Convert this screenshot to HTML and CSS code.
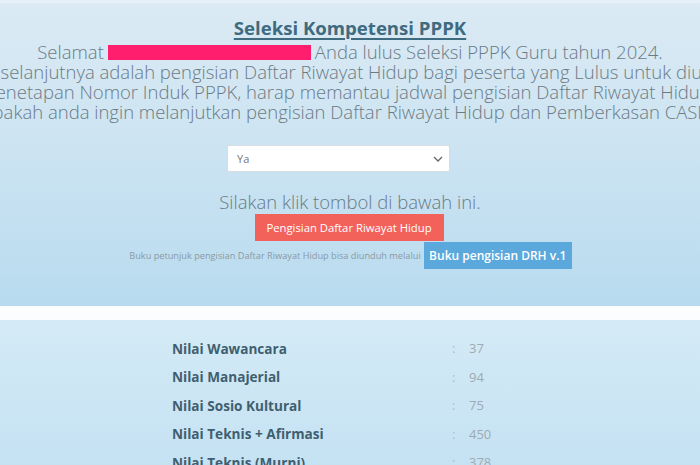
FILE: index.html
```html
<!DOCTYPE html>
<html lang="id">
<head>
    <meta charset="UTF-8">
    <meta name="viewport" content="width=device-width, initial-scale=1.0">
    <title>Seleksi Kompetensi PPPK</title>
    <link rel="stylesheet" href="styles.css">
</head>
<body>
    <div class="panel top-panel">
        <h2 class="title">Seleksi Kompetensi PPPK</h2>
        <div class="lead">
            <div class="line">Selamat <span class="redact"></span> Anda lulus Seleksi PPPK Guru tahun 2024.</div>
            <div class="line">Tahap selanjutnya adalah pengisian Daftar Riwayat Hidup bagi peserta yang Lulus untuk diusulkan</div>
            <div class="line">Penetapan Nomor Induk PPPK, harap memantau jadwal pengisian Daftar Riwayat Hidup.</div>
            <div class="line">Apakah anda ingin melanjutkan pengisian Daftar Riwayat Hidup dan Pemberkasan CASN?</div>
        </div>

        <div class="select-wrap">
            <div class="select">
                <span>Ya</span>
                <svg width="10" height="6" viewBox="0 0 10 6"><path d="M1 1l4 4 4-4" fill="none" stroke="#666" stroke-width="1.3"/></svg>
            </div>
        </div>

        <div class="hint">Silakan klik tombol di bawah ini.</div>
        <div class="btn-row"><button class="btn btn-red">Pengisian Daftar Riwayat Hidup</button></div>
        <div class="guide-row">
            <span class="guide-text">Buku petunjuk pengisian Daftar Riwayat Hidup bisa diunduh melalui</span>
            <button class="btn btn-blue">Buku pengisian DRH v.1</button>
        </div>
    </div>

    <div class="gap"></div>

    <div class="panel score-panel">
        <table class="scores">
            <tr><td class="label">Nilai Wawancara</td><td class="colon">:</td><td class="val">37</td></tr>
            <tr><td class="label">Nilai Manajerial</td><td class="colon">:</td><td class="val">94</td></tr>
            <tr><td class="label">Nilai Sosio Kultural</td><td class="colon">:</td><td class="val">75</td></tr>
            <tr><td class="label">Nilai Teknis + Afirmasi</td><td class="colon">:</td><td class="val">450</td></tr>
            <tr><td class="label">Nilai Teknis (Murni)</td><td class="colon">:</td><td class="val">378</td></tr>
        </table>
    </div>
</body>
</html>
```

FILE: styles.css
```css
body { margin: 0; padding: 0; font-family: 'Open Sans', sans-serif; background: #fbfdfe; overflow: hidden; height: 465px; }
.panel { overflow: hidden; }
.top-panel { height: 306px; box-sizing: border-box; padding-top: 3px; background: linear-gradient(180deg, #dbeaf4 0%, #cde4f2 45%, #b8dbef 100%); border-top: 3px solid #e6f1f7; }
.title { margin: 10px 0 0; text-align: center; font-size: 18.6px; font-weight: 700; color: #3f6b80; text-decoration: underline; text-underline-offset: 3px; text-decoration-thickness: 1.5px; line-height: 24px; }
.lead { margin-top: 2px; }
.line { display: flex; justify-content: center; white-space: nowrap; font-size: 18.5px; font-weight: 300; color: #6a7b86; line-height: 20px; }
.redact { display: inline-block; width: 203px; height: 15px; background: #ff1e6e; margin: 3px 4px 0 4px; vertical-align: top; }
.select-wrap { display: flex; justify-content: center; margin-top: 23px; padding-right: 23px; }
.select { width: 223px; height: 27px; box-sizing: border-box; background: #fff; border: 1px solid #d6dde2; border-radius: 2px; display: flex; align-items: center; justify-content: space-between; padding: 0 6px 0 9px; font-size: 11px; color: #777; }
.hint { text-align: center; margin-top: 19px; font-size: 18.5px; font-weight: 300; color: #6a7b86; line-height: 22px; }
.btn-row { display: flex; justify-content: center; padding-right: 2px; }
.btn { border: none; border-radius: 0; color: #fff; font-family: 'Open Sans', sans-serif; cursor: pointer; white-space: nowrap; padding: 0; }
.btn-red { background: #f3625a; width: 189px; height: 27px; font-size: 11.3px; margin-top: 1px; }
.guide-row { display: flex; justify-content: center; align-items: center; margin-top: 1px; padding-left: 1px; }
.guide-text { font-size: 9.2px; color: #8a9aa4; margin-right: 3px; }
.btn-blue { background: #5aa8dc; width: 148px; height: 27px; font-size: 12px; font-weight: 600; }
.gap { height: 14px; background: #fbfdfe; }
.score-panel { height: 145px; box-sizing: border-box; background: linear-gradient(180deg, #d4ebf6 0%, #cbe5f4 60%, #c5e2f3 100%); padding-top: 14px; }
.scores { border-collapse: collapse; margin-left: 168px; }
.scores td { padding: 0; height: 28.5px; font-size: 13px; }
.label { font-weight: 700; color: #3f5f70; width: 280px; padding-left: 4px !important; font-size: 13.6px !important; }
.colon { color: #b0bcc3; width: 17px; }
.val { color: #9eaab2; font-weight: 400; }
```
